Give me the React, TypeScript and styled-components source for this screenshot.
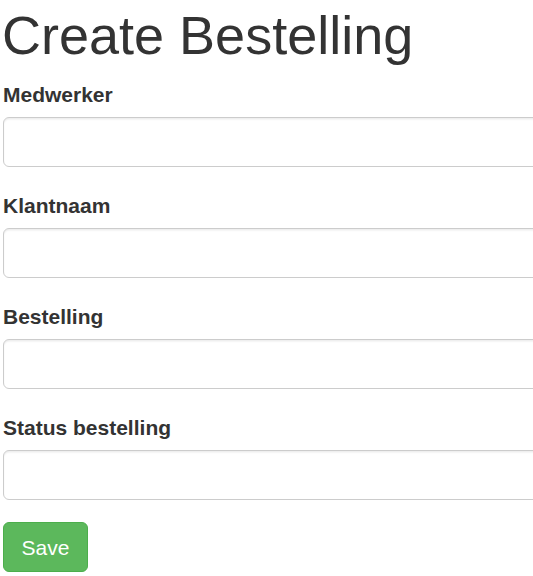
import React from "react";
import styled, { createGlobalStyle } from "styled-components";

const Global = createGlobalStyle`
  html, body {
    margin: 0;
    padding: 0;
    background: #fff;
    overflow: hidden;
  }
  body {
    font-family: "Liberation Sans", Arial, Helvetica, sans-serif;
    color: #333;
  }
  * { box-sizing: border-box; }
`;

const Page = styled.div`
  padding: 6px 0 0 3px;
  width: 533px;
  overflow: hidden;
`;

const Title = styled.h1`
  margin: 0 0 13px -1px;
  font-size: 54px;
  font-weight: 400;
  line-height: 59px;
  color: #333;
`;

const Form = styled.form`
  display: flex;
  flex-direction: column;
`;

const Group = styled.div`
  display: flex;
  flex-direction: column;
  margin-bottom: 22px;
`;

const Label = styled.label`
  font-size: 21px;
  font-weight: 700;
  line-height: 34px;
  margin-bottom: 5px;
  color: #333;
`;

const Input = styled.input`
  display: block;
  width: 700px;
  height: 50px;
  padding: 9px 18px;
  font-size: 21px;
  font-family: inherit;
  color: #555;
  background: #fff;
  border: 1px solid #ccc;
  border-radius: 6px;
  box-shadow: inset 0 1.5px 1.5px rgba(0, 0, 0, 0.075);
  outline: none;
`;

const Button = styled.button`
  align-self: flex-start;
  height: 50px;
  padding: 10px 17.5px 8px;
  font-family: inherit;
  font-size: 21px;
  line-height: 30px;
  color: #fff;
  background: #5cb85c;
  border: 1px solid #4cae4c;
  border-radius: 6px;
  cursor: pointer;
`;

const fields = ["Medwerker", "Klantnaam", "Bestelling", "Status bestelling"];

export default function App() {
  return (
    <>
      <Global />
      <Page>
        <Title>Create Bestelling</Title>
        <Form onSubmit={(e) => e.preventDefault()}>
          {fields.map((f) => (
            <Group key={f}>
              <Label>{f}</Label>
              <Input type="text" />
            </Group>
          ))}
          <Button type="submit">Save</Button>
        </Form>
      </Page>
    </>
  );
}
